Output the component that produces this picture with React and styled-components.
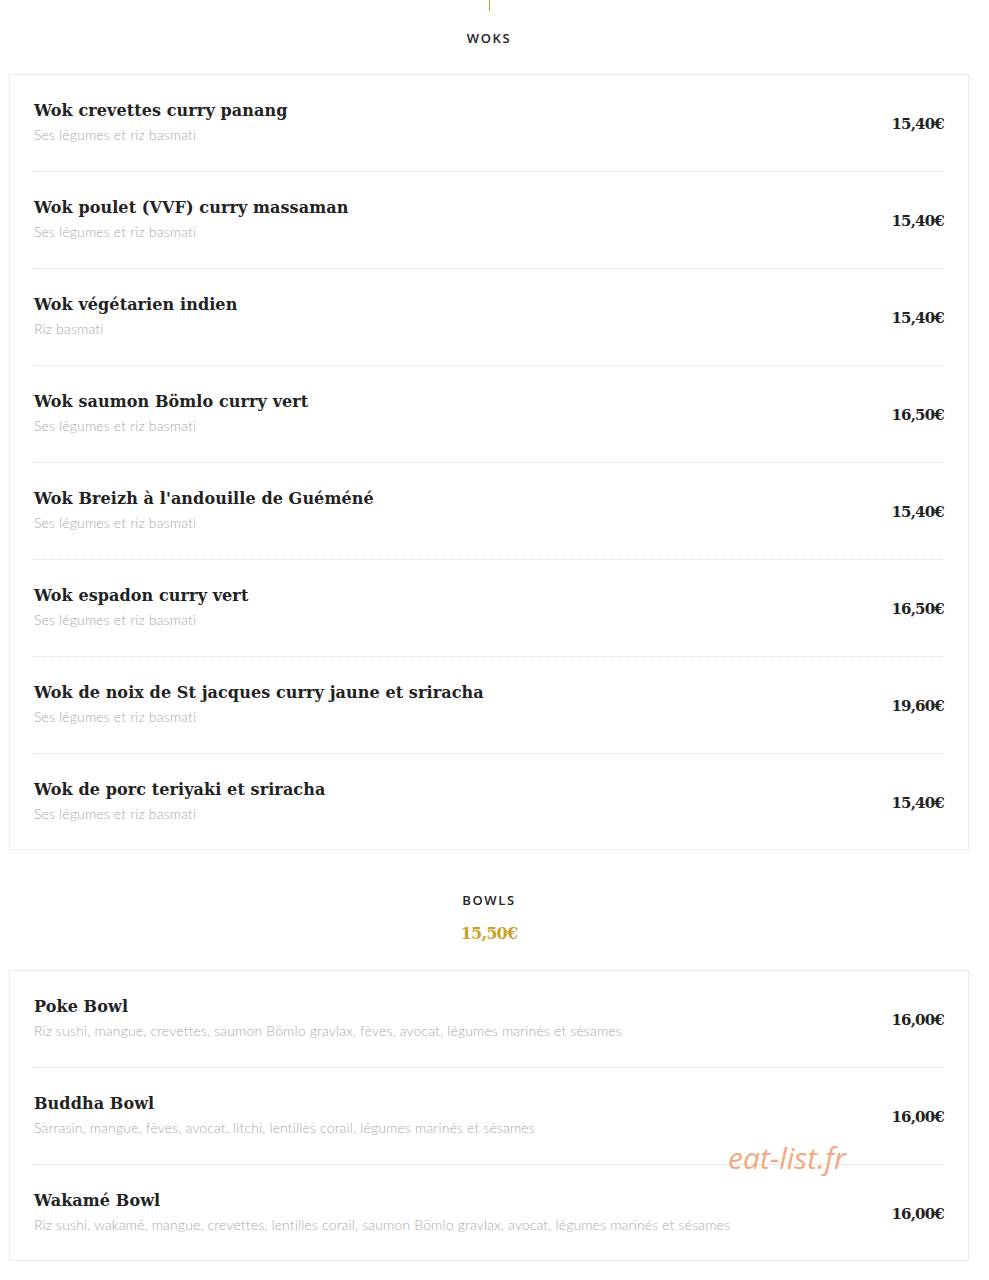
import React from 'react';
import styled, { createGlobalStyle } from 'styled-components';

const GlobalStyle = createGlobalStyle`
  body {
    margin: 0;
    background: #fff;
    font-family: "Open Sans", "Liberation Sans", sans-serif;
  }
`;

const Page = styled.div`
  position: relative;
  width: 960px;
  margin-left: 9px;
  padding-bottom: 18px;
`;

const Section = styled.section`
  display: flex;
  flex-direction: column;
  align-items: center;
`;

const GoldLine = styled.div`
  width: 1px;
  height: 11px;
  background: #c9a227;
`;

const SectionTitle = styled.h2`
  margin: ${p => p.$top}px 0 0;
  font-family: "Open Sans", "Liberation Sans", sans-serif;
  font-size: 13px;
  font-weight: 600;
  letter-spacing: 1.6px;
  line-height: 16px;
  color: #222;
  text-transform: uppercase;
`;

const SectionPrice = styled.div`
  margin-top: 16px;
  font-family: "DejaVu Serif", "Liberation Serif", serif;
  font-weight: 700;
  font-size: 16px;
  letter-spacing: -0.8px;
  line-height: 20px;
  color: #c9a227;
`;

const Card = styled.div`
  align-self: stretch;
  margin-top: ${p => p.$top}px;
  border: 1px solid #ececec;
  padding: 0 24px;
`;

const Row = styled.div`
  display: flex;
  align-items: center;
  justify-content: space-between;
  padding: 24px 0 26px;
  border-bottom: 1px dotted #dcdcdc;

  &:last-child {
    border-bottom: none;
    padding-bottom: 25px;
  }
`;

const Info = styled.div`
  display: flex;
  flex-direction: column;
  gap: 2px;
`;

const Name = styled.div`
  font-family: "DejaVu Serif", "Liberation Serif", serif;
  font-weight: 700;
  font-size: 16px;
  letter-spacing: 0.1px;
  line-height: 24px;
  color: #222;
`;

const Desc = styled.div`
  font-family: "Lato", "Open Sans", sans-serif;
  font-weight: 300;
  font-size: 14px;
  letter-spacing: 0.15px;
  line-height: 20px;
  color: #a9a9a9;
`;

const Price = styled.div`
  margin-top: 4px;
  font-family: "DejaVu Serif", "Liberation Serif", serif;
  font-weight: 700;
  font-size: 15px;
  letter-spacing: -0.8px;
  color: #222;
`;

const Watermark = styled.div`
  position: absolute;
  left: 719px;
  top: 1137px;
  font-family: "Open Sans", "Liberation Sans", sans-serif;
  font-style: italic;
  font-size: 30px;
  color: #f3a882;
  pointer-events: none;
`;

const woks = [
  ['Wok crevettes curry panang', 'Ses légumes et riz basmati', '15,40€'],
  ['Wok poulet (VVF) curry massaman', 'Ses légumes et riz basmati', '15,40€'],
  ['Wok végétarien indien', 'Riz basmati', '15,40€'],
  ['Wok saumon Bömlo curry vert', 'Ses légumes et riz basmati', '16,50€'],
  ["Wok Breizh à l'andouille de Guéméné", 'Ses légumes et riz basmati', '15,40€'],
  ['Wok espadon curry vert', 'Ses légumes et riz basmati', '16,50€'],
  ['Wok de noix de St jacques curry jaune et sriracha', 'Ses légumes et riz basmati', '19,60€'],
  ['Wok de porc teriyaki et sriracha', 'Ses légumes et riz basmati', '15,40€'],
];

const bowls = [
  ['Poke Bowl', 'Riz sushi, mangue, crevettes, saumon Bömlo gravlax, fèves, avocat, légumes marinés et sésames', '16,00€'],
  ['Buddha Bowl', 'Sarrasin, mangue, fèves, avocat, litchi, lentilles corail, légumes marinés et sésames', '16,00€'],
  ['Wakamé Bowl', 'Riz sushi, wakamé, mangue, crevettes, lentilles corail, saumon Bömlo gravlax, avocat, légumes marinés et sésames', '16,00€'],
];

const MenuRows = ({ items }) =>
  items.map(([name, desc, price]) => (
    <Row key={name}>
      <Info>
        <Name>{name}</Name>
        <Desc>{desc}</Desc>
      </Info>
      <Price>{price}</Price>
    </Row>
  ));

export default function App() {
  return (
    <>
      <GlobalStyle />
      <Page>
        <Section>
          <GoldLine />
          <SectionTitle $top={19}>Woks</SectionTitle>
          <Card $top={28}>
            <MenuRows items={woks} />
          </Card>
        </Section>
        <Section>
          <SectionTitle $top={42}>Bowls</SectionTitle>
          <SectionPrice>15,50€</SectionPrice>
          <Card $top={26}>
            <MenuRows items={bowls} />
          </Card>
        </Section>
        <Watermark>eat-list.fr</Watermark>
      </Page>
    </>
  );
}
